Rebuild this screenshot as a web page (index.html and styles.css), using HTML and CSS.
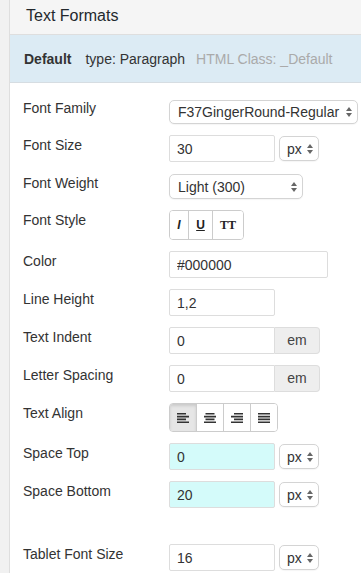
FILE: index.html
```html
<!DOCTYPE html>
<html lang="en">
<head>
  <meta charset="UTF-8" />
  <title>Text Formats</title>
  <link rel="stylesheet" href="styles.css">
</head>
<body>

  <div class="screen">
    <div class="gutter"></div>

    <div class="panel">
      <div class="panel-title">Text Formats</div>

      <div class="format-head">
        <strong>Default</strong>
        <span class="type">type: Paragraph</span>
        <span class="muted">HTML Class: _Default</span>
      </div>

      <div class="fields">
        <div class="field">
          <label>Font Family</label>
          <div class="control">
            <div class="select family"><span>F37GingerRound-Regular</span>
              <svg class="arrows" width="6" height="10" viewBox="0 0 6 10"><path d="M3 0L6 4H0z M3 10L0 6h6z" fill="#666"/></svg>
            </div>
          </div>
        </div>

        <div class="field">
          <label>Font Size</label>
          <div class="control">
            <input class="input short" type="text" value="30">
            <div class="select unit"><span>px</span>
              <svg class="arrows" width="6" height="10" viewBox="0 0 6 10"><path d="M3 0L6 4H0z M3 10L0 6h6z" fill="#666"/></svg>
            </div>
          </div>
        </div>

        <div class="field">
          <label>Font Weight</label>
          <div class="control">
            <div class="select weight"><span>Light (300)</span>
              <svg class="arrows" width="6" height="10" viewBox="0 0 6 10"><path d="M3 0L6 4H0z M3 10L0 6h6z" fill="#666"/></svg>
            </div>
          </div>
        </div>

        <div class="field">
          <label>Font Style</label>
          <div class="control">
            <div class="btn-group">
              <span class="btn btn-i">I</span>
              <span class="btn btn-u">U</span>
              <span class="btn btn-tt">TT</span>
            </div>
          </div>
        </div>

        <div class="field">
          <label>Color</label>
          <div class="control">
            <input class="input color" type="text" value="#000000">
          </div>
        </div>

        <div class="field">
          <label>Line Height</label>
          <div class="control">
            <input class="input short" type="text" value="1,2">
          </div>
        </div>

        <div class="field">
          <label>Text Indent</label>
          <div class="control">
            <div class="input-group">
              <input class="input short" type="text" value="0">
              <span class="addon">em</span>
            </div>
          </div>
        </div>

        <div class="field">
          <label>Letter Spacing</label>
          <div class="control">
            <div class="input-group">
              <input class="input short" type="text" value="0">
              <span class="addon">em</span>
            </div>
          </div>
        </div>

        <div class="field">
          <label>Text Align</label>
          <div class="control">
            <div class="btn-group align">
              <span class="btn active">
                <svg width="12" height="10" viewBox="0 0 12 10"><path d="M0 0h9v1.6H0z M0 2.8h12v1.6H0z M0 5.6h9v1.6H0z M0 8.4h12V10H0z" fill="#333"/></svg>
              </span>
              <span class="btn">
                <svg width="12" height="10" viewBox="0 0 12 10"><path d="M1.5 0h9v1.6h-9z M0 2.8h12v1.6H0z M1.5 5.6h9v1.6h-9z M0 8.4h12V10H0z" fill="#333"/></svg>
              </span>
              <span class="btn">
                <svg width="12" height="10" viewBox="0 0 12 10"><path d="M3 0h9v1.6H3z M0 2.8h12v1.6H0z M3 5.6h9v1.6H3z M0 8.4h12V10H0z" fill="#333"/></svg>
              </span>
              <span class="btn">
                <svg width="12" height="10" viewBox="0 0 12 10"><path d="M0 0h12v1.6H0z M0 2.8h12v1.6H0z M0 5.6h12v1.6H0z M0 8.4h12V10H0z" fill="#333"/></svg>
              </span>
            </div>
          </div>
        </div>

        <div class="field">
          <label>Space Top</label>
          <div class="control">
            <input class="input short changed" type="text" value="0">
            <div class="select unit"><span>px</span>
              <svg class="arrows" width="6" height="10" viewBox="0 0 6 10"><path d="M3 0L6 4H0z M3 10L0 6h6z" fill="#666"/></svg>
            </div>
          </div>
        </div>

        <div class="field">
          <label>Space Bottom</label>
          <div class="control">
            <input class="input short changed" type="text" value="20">
            <div class="select unit"><span>px</span>
              <svg class="arrows" width="6" height="10" viewBox="0 0 6 10"><path d="M3 0L6 4H0z M3 10L0 6h6z" fill="#666"/></svg>
            </div>
          </div>
        </div>

        <div class="field tablet">
          <label>Tablet Font Size</label>
          <div class="control">
            <input class="input short" type="text" value="16">
            <div class="select unit"><span>px</span>
              <svg class="arrows" width="6" height="10" viewBox="0 0 6 10"><path d="M3 0L6 4H0z M3 10L0 6h6z" fill="#666"/></svg>
            </div>
          </div>
        </div>
      </div>
    </div>
  </div>

</body>
</html>
```

FILE: styles.css
```css
body {
  margin: 0;
  font-family: "Liberation Sans", Arial, sans-serif;
  color: #333;
  overflow: hidden;
}

.screen {
  display: flex;
  height: 573px;
  overflow: hidden;
}

.gutter {
  width: 9px;
  flex-shrink: 0;
  background-color: #f1f1f1;
  border-right: 1px solid #dedede;
}

.panel {
  flex: 1;
  min-width: 0;
  background-color: #fff;
}

.panel-title {
  height: 34px;
  line-height: 32px;
  padding-left: 16px;
  font-size: 16px;
  color: #23282d;
  background-color: #f5f5f5;
  border-bottom: 1px solid #dedede;
}

.format-head {
  display: flex;
  align-items: center;
  height: 47px;
  padding-left: 14px;
  font-size: 14px;
  white-space: nowrap;
  background-color: #dcebf4;
  border-bottom: 1px solid #d6dde2;
}

.format-head strong {
  margin-right: 14px;
}

.format-head .type {
  margin-right: 11px;
}

.format-head .muted {
  color: #aaa;
}

.fields {
  padding: 15px 0 0 13px;
}

.field {
  display: flex;
  align-items: flex-start;
  margin-bottom: 11px;
}

/* margins collapse with the row above */
.field.tablet {
  margin-top: 36px;
}

.field label {
  width: 146px;
  flex-shrink: 0;
  font-size: 14px;
  line-height: 20px;
}

.control {
  display: flex;
  align-items: center;
  gap: 4px;
  white-space: nowrap;
}

.input {
  box-sizing: border-box;
  height: 27px;
  margin: 0;
  padding: 0 7px;
  border: 1px solid #ddd;
  border-radius: 2px;
  font-family: "Liberation Sans", Arial, sans-serif;
  font-size: 14px;
  color: #333;
  background-color: #fff;
  outline: none;
}

.input.short {
  width: 106px;
}

.input.color {
  width: 159px;
}

.input.changed {
  background-color: #d4fbfa;
}

.select {
  box-sizing: border-box;
  display: flex;
  align-items: center;
  justify-content: space-between;
  height: 25px;
  padding: 0 5px 0 8px;
  border: 1px solid #d4d4d4;
  border-radius: 5px;
  font-size: 14px;
  background-color: #fff;
  box-shadow: 0 1px 1px rgba(0, 0, 0, 0.04);
}

.select.family {
  width: 189px;
  height: 24px;
  margin-top: 2px;
}

.select.weight {
  width: 134px;
  margin-top: 1px;
}

.select.unit {
  width: 40px;
  padding-left: 7px;
}

.btn-group {
  display: flex;
  height: 30px;
  box-sizing: border-box;
  border: 1px solid #ccc;
  border-radius: 4px;
  overflow: hidden;
}

.btn {
  display: flex;
  align-items: center;
  justify-content: center;
  border-left: 1px solid #ccc;
  color: #222;
  background-color: #fff;
}

.btn:first-child {
  border-left: none;
}

.btn-i {
  width: 18px;
  font-weight: bold;
  font-style: italic;
  font-size: 12px;
}

.btn-u {
  width: 23px;
  font-weight: bold;
  font-size: 12px;
  text-decoration: underline;
}

.btn-tt {
  width: 30px;
  font-family: "Liberation Serif", serif;
  font-weight: bold;
  font-size: 12px;
}

.btn-group.align {
  height: 29px;
}

.btn-group.align .btn {
  width: 26px;
}

.btn.active {
  background-color: #e6e6e6;
  box-shadow: inset 0 2px 3px rgba(0, 0, 0, 0.12);
}

.input-group {
  display: flex;
}

.input-group .input {
  border-radius: 2px 0 0 2px;
}

.addon {
  box-sizing: border-box;
  width: 45px;
  height: 27px;
  line-height: 25px;
  text-align: center;
  font-size: 14px;
  color: #444;
  background-color: #eee;
  border: 1px solid #ddd;
  border-left: none;
  border-radius: 0 4px 4px 0;
}
```
